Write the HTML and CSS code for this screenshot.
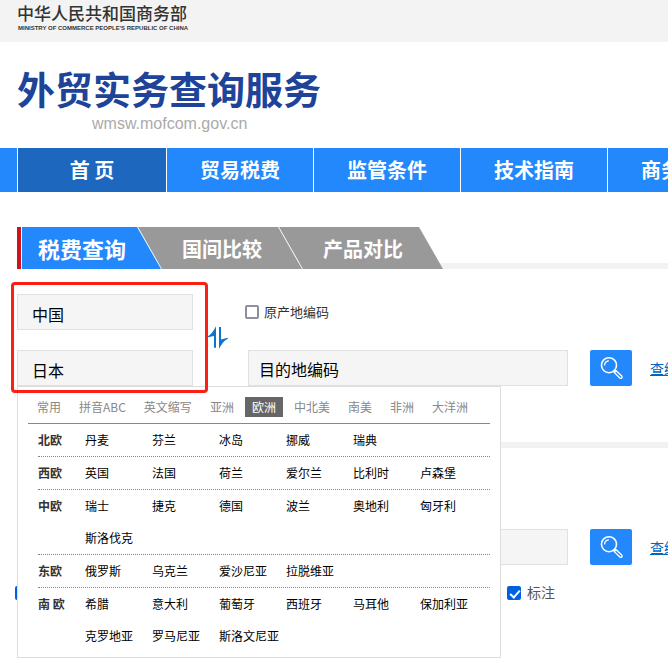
FILE: index.html
```html
<!DOCTYPE html>
<html lang="zh-CN">
<head>
  <meta charset="UTF-8" />
  <title>外贸实务查询服务</title>
  <link rel="stylesheet" href="styles.css">
</head>
<body>

  <div class="topbar">
    <div class="ministry">中华人民共和国商务部</div>
    <div class="ministry-en">MINISTRY OF COMMERCE PEOPLE'S REPUBLIC OF CHINA</div>
  </div>

  <header class="header">
    <h1>外贸实务查询服务</h1>
    <p class="site-url">wmsw.mofcom.gov.cn</p>
  </header>

  <nav class="nav">
    <a href="#" class="active">首 页</a>
    <a href="#">贸易税费</a>
    <a href="#">监管条件</a>
    <a href="#">技术指南</a>
    <a href="#">商务指南</a>
  </nav>

  <main class="main">
    <div class="tabs">
      <button type="button" class="tab active">税费查询</button>
      <button type="button" class="tab">国间比较</button>
      <button type="button" class="tab">产品对比</button>
    </div>

    <form class="query">
      <div class="countries">
        <input type="text" class="field" aria-label="出口国" value="中国">
        <input type="text" class="field" aria-label="进口国" value="日本">
        <div class="highlight"></div>

        <!-- country picker -->
        <div class="picker">
          <div class="picker-tabs">
            <button type="button">常用</button>
            <button type="button">拼音ABC</button>
            <button type="button">英文缩写</button>
            <button type="button">亚洲</button>
            <button type="button" class="active">欧洲</button>
            <button type="button">中北美</button>
            <button type="button">南美</button>
            <button type="button">非洲</button>
            <button type="button">大洋洲</button>
          </div>
          <dl class="region">
            <dt>北欧</dt>
            <dd><a href="#">丹麦</a><a href="#">芬兰</a><a href="#">冰岛</a><a href="#">挪威</a><a href="#">瑞典</a></dd>
          </dl>
          <dl class="region">
            <dt>西欧</dt>
            <dd><a href="#">英国</a><a href="#">法国</a><a href="#">荷兰</a><a href="#">爱尔兰</a><a href="#">比利时</a><a href="#">卢森堡</a></dd>
          </dl>
          <dl class="region">
            <dt>中欧</dt>
            <dd><a href="#">瑞士</a><a href="#">捷克</a><a href="#">德国</a><a href="#">波兰</a><a href="#">奥地利</a><a href="#">匈牙利</a><a href="#">斯洛伐克</a></dd>
          </dl>
          <dl class="region">
            <dt>东欧</dt>
            <dd><a href="#">俄罗斯</a><a href="#">乌克兰</a><a href="#">爱沙尼亚</a><a href="#">拉脱维亚</a></dd>
          </dl>
          <dl class="region">
            <dt>南 欧</dt>
            <dd><a href="#">希腊</a><a href="#">意大利</a><a href="#">葡萄牙</a><a href="#">西班牙</a><a href="#">马耳他</a><a href="#">保加利亚</a><a href="#">克罗地亚</a><a href="#">罗马尼亚</a><a href="#">斯洛文尼亚</a></dd>
          </dl>
        </div>
      </div>

      <button type="button" class="swap" aria-label="互换">
        <svg width="20" height="23" viewBox="0 0 20 23" fill="#0b74d1">
          <path d="M8 .3V21.8H6V10L0 11.3V10.2C3 8.600 6 4.500 8 .3Z"/>
          <path d="M11 1H13V13.600L19.800 11.800V12.800C16.500 14.500 13.500 18 11 22.800Z"/>
        </svg>
      </button>

      <div class="codes">
        <div class="check-line">
          <input type="checkbox" id="origin">
          <label for="origin">原产地编码</label>
        </div>
        <input type="text" class="field code-field" aria-label="目的地编码" placeholder="目的地编码">
      </div>

      <button type="submit" class="btn-search" aria-label="查询">
        <svg width="42" height="36" viewBox="0 0 42 36" fill="none" stroke="#fff" stroke-linecap="round">
          <circle cx="19" cy="15.2" r="7.500" stroke-width="1.600"/>
          <path d="M14.600 14.800A4.600 4.600 0 0 1 18.400 10.800" stroke-width="1.300"/>
          <path d="M25 21.400L30.800 27" stroke-width="4"/>
          <path d="M26 22.600L30.800 27" stroke="#2288fc" stroke-width="1.300"/>
        </svg>
      </button>
      <a href="#" class="code-link">查编码</a>
    </form>

    <form class="query query-second">
      <input type="text" class="field code-field" aria-label="商品编码">
      <button type="submit" class="btn-search" aria-label="查询">
        <svg width="42" height="36" viewBox="0 0 42 36" fill="none" stroke="#fff" stroke-linecap="round">
          <circle cx="19" cy="15.2" r="7.500" stroke-width="1.600"/>
          <path d="M14.600 14.800A4.600 4.600 0 0 1 18.400 10.800" stroke-width="1.300"/>
          <path d="M25 21.400L30.800 27" stroke-width="4"/>
          <path d="M26 22.600L30.800 27" stroke="#2288fc" stroke-width="1.300"/>
        </svg>
      </button>
      <a href="#" class="code-link">查编码</a>
    </form>

    <div class="options">
      <input type="checkbox" aria-label="全部" checked>
      <div class="check-line">
        <input type="checkbox" id="mark" checked>
        <label for="mark">标注</label>
      </div>
    </div>
  </main>

</body>
</html>
```

FILE: styles.css
```css
* {
  box-sizing: border-box;
}

body {
  margin: 0;
  min-height: 100vh;
  background: #fff;
  color: #333;
  font-family: "Noto Sans CJK SC", sans-serif;
  font-size: 14px;
  overflow-x: hidden;
}

button, input {
  font-family: inherit;
}

button {
  border: none;
  padding: 0;
  background: none;
  cursor: pointer;
}

a {
  text-decoration: none;
}

.topbar {
  height: 42px;
  padding: 3px 17px 0;
  background: #f3f3f3;
}

.ministry {
  font-size: 17px;
  font-weight: 500;
  line-height: 20px;
}

.ministry-en {
  padding: 1px 0 0 1px;
  font-family: "Liberation Sans", sans-serif;
  font-size: 6px;
  font-weight: bold;
  line-height: 9px;
}

.header {
  height: 106px;
  padding: 22px 17px 0;
}

h1 {
  margin: 0 0 2px;
  font-size: 38px;
  line-height: 48px;
  color: #20439a;
}

.site-url {
  margin: 0;
  padding-left: 75px;
  font-family: "Liberation Sans", sans-serif;
  font-size: 16px;
  line-height: 20px;
  color: #aaa;
}

.nav {
  display: flex;
  padding-left: 17px;
  background: #2288fc;
  overflow: hidden;
}

.nav a {
  flex: none;
  width: 147px;
  border-left: 1px solid #fff;
  font-size: 20px;
  font-weight: bold;
  line-height: 44px;
  text-align: center;
  color: #fff;
}

.nav a.active {
  width: 149px;
  background: #1e67bf;
}

.main {
  padding: 35px 0 65px 17px;
}

.tabs {
  display: flex;
  border-left: 4px solid #d0121b;
  padding-left: 1px;
  background: linear-gradient(#f2f2f2, #f2f2f2) bottom / 100% 6px no-repeat;
}

.tab {
  height: 42px;
  margin-left: -23px;
  padding: 0 40px 0 44px;
  background: #999;
  color: #fff;
  font-size: 20px;
  font-weight: bold;
  clip-path: polygon(0 0, calc(100% - 24px) 0, 100% 100%, 24px 100%);
}

.tab.active {
  margin-left: 0;
  padding: 0 35px 0 16px;
  background: #2288fc;
  font-size: 22px;
  clip-path: polygon(0 0, calc(100% - 24px) 0, 100% 100%, 0 100%);
}

.query {
  display: flex;
  align-items: flex-end;
  padding: 25px 0 56px;
  border-bottom: 6px solid #f2f2f2;
}

.countries {
  position: relative;
  flex: none;
  display: flex;
  flex-direction: column;
  gap: 20px;
  width: 176px;
}

.field {
  width: 100%;
  height: 36px;
  padding: 3px 14px 0;
  border: 1px solid #e1e1e1;
  background: #f5f5f5;
  font-size: 16px;
  color: #000;
  outline: none;
}

.code-field {
  flex: none;
  width: 320px;
  padding: 1px 10px 0;
}

.code-field::placeholder {
  color: #000;
}

.highlight {
  position: absolute;
  inset: -12px -15px -7px -6px;
  border: 3px solid #fc1f14;
  border-radius: 4px;
  pointer-events: none;
  z-index: 3;
}

.swap {
  flex: none;
  display: flex;
  align-self: center;
  width: 52px;
  padding: 0 0 6px 15px;
}

.codes {
  flex: none;
  display: flex;
  flex-direction: column;
  align-items: flex-end;
  gap: 20px;
  width: 323px;
}

.codes .check-line {
  width: 100%;
  height: 36px;
  font-size: 13px;
}

.check-line {
  display: flex;
  align-items: center;
  gap: 5px;
}

.check-line label {
  padding-bottom: 2px;
}

input[type="checkbox"] {
  appearance: none;
  flex: none;
  position: relative;
  width: 14px;
  height: 14px;
  margin: 0;
  border: 2px solid #8f8f9d;
  border-radius: 2px;
  background: #fff;
}

input[type="checkbox"]:checked {
  border-color: #0060df;
  background: #0060df;
}

input[type="checkbox"]:checked::after {
  content: "";
  position: absolute;
  left: 3px;
  top: 0;
  width: 4px;
  height: 8px;
  border: solid #fff;
  border-width: 0 2px 2px 0;
  transform: rotate(42deg);
}

.btn-search {
  flex: none;
  display: flex;
  width: 42px;
  height: 36px;
  margin: 0 18px 0 22px;
  border-radius: 2px;
  background: #2288fc;
}

.code-link {
  flex: none;
  line-height: 36px;
  color: #0066c0;
  text-decoration: underline;
}

/* country picker */
.picker {
  position: absolute;
  top: 100%;
  left: 0;
  width: 484px;
  padding: 10px 10px 5px;
  border: 1px solid #ddd;
  background: #fff;
  font-size: 12px;
  z-index: 2;
}

.picker-tabs {
  display: flex;
  gap: 4px;
  padding: 0 2px 6px;
  border-bottom: 1px solid #5b93c8;
}

.picker-tabs button {
  padding: 0 7px;
  font-size: 12px;
  line-height: 20px;
  color: #888;
}

.picker-tabs .active {
  background: #666;
  color: #fff;
}

.region {
  display: flex;
  margin: 0 0 0 10px;
  border-bottom: 1px dotted #7b8b8b;
  line-height: 32px;
}

.region:last-child {
  border-bottom: none;
}

.region dt {
  flex: none;
  width: 47px;
  font-weight: bold;
}

.region dd {
  display: grid;
  grid-template-columns: repeat(6, 67px);
  margin: 0;
}

.region a {
  color: #000;
  white-space: nowrap;
}

.query-second {
  padding: 81px 0 0 231px;
  border-bottom: none;
}

.options {
  display: flex;
  align-items: center;
  gap: 478px;
  margin: 17px 0 0 -2px;
}

.options .check-line {
  gap: 6px;
  color: #555;
}
```
